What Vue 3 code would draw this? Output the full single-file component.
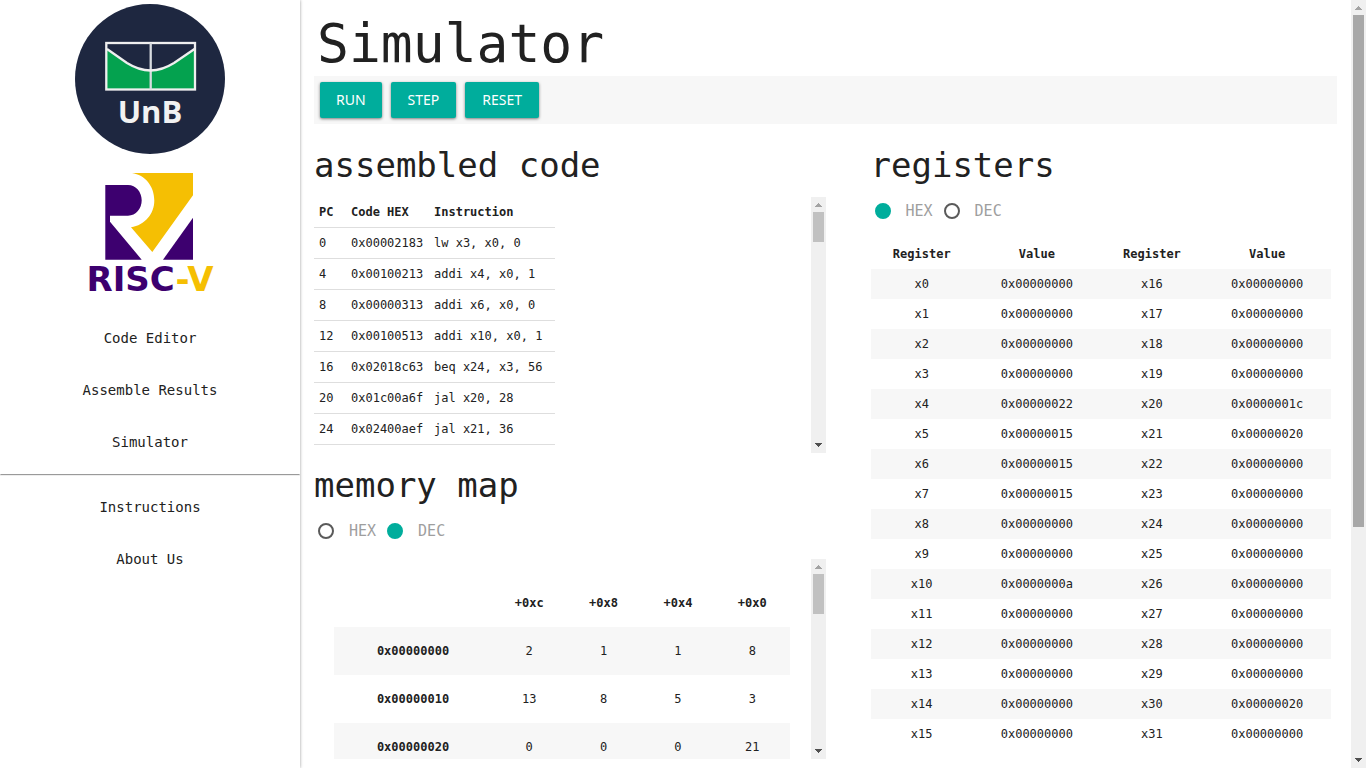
<script setup>
import { ref } from 'vue'

const memoryBase = ref('dec')
const registerBase = ref('hex')

const mainLinks = ['Code Editor', 'Assemble Results', 'Simulator']
const infoLinks = ['Instructions', 'About Us']
const actions = ['RUN', 'STEP', 'RESET']

const code = [
  [0, '0x00002183', 'lw x3, x0, 0'],
  [4, '0x00100213', 'addi x4, x0, 1'],
  [8, '0x00000313', 'addi x6, x0, 0'],
  [12, '0x00100513', 'addi x10, x0, 1'],
  [16, '0x02018c63', 'beq x24, x3, 56'],
  [20, '0x01c00a6f', 'jal x20, 28'],
  [24, '0x02400aef', 'jal x21, 36'],
]

const memory = [
  ['0x00000000', 2, 1, 1, 8],
  ['0x00000010', 13, 8, 5, 3],
  ['0x00000020', 0, 0, 0, 21],
]

const nonZero = { 4: 0x22, 5: 0x15, 6: 0x15, 7: 0x15, 10: 0xa, 20: 0x1c, 21: 0x20, 30: 0x20 }
const hex = (i) => '0x' + (nonZero[i] || 0).toString(16).padStart(8, '0')
const registers = Array.from({ length: 16 }, (_, i) => [`x${i}`, hex(i), `x${i + 16}`, hex(i + 16)])
</script>

<template>
  <div class="app">
    <aside class="sidebar">
      <svg class="unb" viewBox="0 0 150 150" role="img" aria-label="UnB">
        <circle cx="75" cy="75" r="75" fill="#1e2740" />
        <path d="M32 46 L54 60.500 Q75.500 72 97 60.500 L119.500 46 V85 H32 Z" fill="#04a24f" />
        <g fill="none" stroke="#efefef" stroke-width="2.300">
          <rect x="31.300" y="39" width="88.700" height="46.500" />
          <path d="M75.700 39V85.500" stroke="#d8dce0" />
          <path d="M32 45 L52 59 Q64 66.500 75.500 66.500 Q87 66.500 99 59 L119.500 45" />
        </g>
        <text x="75" y="119" text-anchor="middle">UnB</text>
      </svg>
      <svg class="riscv" viewBox="0 0 150 118" role="img" aria-label="RISC-V">
        <g fill="#3d006f">
          <path d="M30.300 12H53C61 12 66.700 19 66.700 27.300S61 42.700 53 42.700H35V48.700L66.700 86.700H30.300Z" />
          <path d="M118 44.700V86.700H88Z" />
        </g>
        <path d="M57 0H118V22.300L77.300 79L56 54.300C70 52 79.300 41 79.300 27.500C79.300 13 70 2 57 0Z" fill="#f5bf03" />
        <text x="75" y="118" text-anchor="middle"><tspan fill="#3d006f">RISC</tspan><tspan fill="#f5bf03">-V</tspan></text>
      </svg>
      <nav>
        <a v-for="l in mainLinks" :key="l" href="#">{{ l }}</a>
        <hr />
        <a v-for="l in infoLinks" :key="l" href="#">{{ l }}</a>
      </nav>
    </aside>

    <main>
      <h1>Simulator</h1>
      <div class="toolbar">
        <button v-for="a in actions" :key="a" type="button">{{ a }}</button>
      </div>
      <div class="panels">
        <div class="left">
          <section>
            <h2>assembled code</h2>
            <div class="scroller code-box">
              <div class="view">
                <table class="code">
                  <thead>
                    <tr><th>PC</th><th>Code HEX</th><th>Instruction</th></tr>
                  </thead>
                  <tbody>
                    <tr v-for="r in code" :key="r[0]"><td v-for="c in r" :key="c">{{ c }}</td></tr>
                  </tbody>
                </table>
              </div>
              <div class="bar">
                <svg viewBox="0 0 15 15"><path d="M4 10H11V9H10V8H9V7H8V6H7V7H6V8H5V9H4Z" fill="#a3a3a3" /></svg>
                <div class="track"><div class="thumb short"></div></div>
                <svg viewBox="0 0 15 15"><path d="M4 5H11V6H10V7H9V8H8V9H7V8H6V7H5V6H4Z" fill="#505050" /></svg>
              </div>
            </div>
          </section>
          <section>
            <h2>memory map</h2>
            <div class="radios">
              <label><input v-model="memoryBase" type="radio" name="memory" value="hex" />HEX</label>
              <label><input v-model="memoryBase" type="radio" name="memory" value="dec" />DEC</label>
            </div>
            <div class="scroller memory-box">
              <div class="view inset">
                <table class="striped memory">
                  <thead>
                    <tr><th></th><th>+0xc</th><th>+0x8</th><th>+0x4</th><th>+0x0</th></tr>
                  </thead>
                  <tbody>
                    <tr v-for="r in memory" :key="r[0]">
                      <th>{{ r[0] }}</th>
                      <td v-for="i in 4" :key="i">{{ r[i] }}</td>
                    </tr>
                  </tbody>
                </table>
              </div>
              <div class="bar">
                <svg viewBox="0 0 15 15"><path d="M4 10H11V9H10V8H9V7H8V6H7V7H6V8H5V9H4Z" fill="#a3a3a3" /></svg>
                <div class="track"><div class="thumb medium"></div></div>
                <svg viewBox="0 0 15 15"><path d="M4 5H11V6H10V7H9V8H8V9H7V8H6V7H5V6H4Z" fill="#505050" /></svg>
              </div>
            </div>
          </section>
        </div>
        <section class="right">
          <h2>registers</h2>
          <div class="radios">
            <label><input v-model="registerBase" type="radio" name="registers" value="hex" />HEX</label>
            <label><input v-model="registerBase" type="radio" name="registers" value="dec" />DEC</label>
          </div>
          <table class="striped registers">
            <thead>
              <tr><th>Register</th><th>Value</th><th>Register</th><th>Value</th></tr>
            </thead>
            <tbody>
              <tr v-for="r in registers" :key="r[0]"><td v-for="(c, i) in r" :key="i">{{ c }}</td></tr>
            </tbody>
          </table>
        </section>
      </div>
    </main>

    <div class="bar page">
      <svg viewBox="0 0 15 15"><path d="M4 10H11V9H10V8H9V7H8V6H7V7H6V8H5V9H4Z" fill="#a3a3a3" /></svg>
      <div class="track"><div class="thumb long"></div></div>
      <svg viewBox="0 0 15 15"><path d="M4 5H11V6H10V7H9V8H8V9H7V8H6V7H5V6H4Z" fill="#505050" /></svg>
    </div>
  </div>
</template>

<style>
body {
  margin: 0;
  background: #fff;
}
</style>

<style scoped>
.app {
  display: flex;
  height: 100vh;
  overflow: hidden;
  color: #212121;
  font-family: "DejaVu Sans Mono", monospace;
  font-size: 12px;
}
.sidebar {
  display: flex;
  flex-direction: column;
  align-items: center;
  flex: 0 0 300px;
  padding-top: 4px;
  box-sizing: border-box;
  box-shadow: 0 0 3px rgba(0, 0, 0, 0.4);
}
.unb {
  width: 150px;
  height: 150px;
  flex: none;
}
.unb text {
  font: 700 31px "Open Sans", sans-serif;
  fill: #f2f2f2;
}
.riscv {
  width: 150px;
  height: 118px;
  flex: none;
  margin-top: 19px;
  overflow: visible;
}
.riscv text {
  font: 700 34px "DejaVu Sans", sans-serif;
}
nav {
  width: 100%;
  margin-top: 21px;
}
nav a {
  display: block;
  font-size: 14px;
  line-height: 52px;
  text-align: center;
  color: #212121;
  text-decoration: none;
}
hr {
  margin: 6px 0 5px;
  border: 1px solid #eee;
  border-top-color: #9a9a9a;
}
main {
  flex: 1;
  min-width: 0;
  padding: 12px 14px 0;
}
h1,
h2 {
  margin: 0;
  font-weight: 400;
}
h1 {
  padding-left: 3px;
  font-size: 53px;
  line-height: 64px;
}
.toolbar {
  display: flex;
  gap: 9px;
  padding: 6px;
  background: #f7f7f7;
}
button {
  height: 36px;
  padding: 0 16px 2px;
  border: 0;
  border-radius: 2px;
  background: #00ad9c;
  color: #fff;
  font: 14px "Noto Sans", sans-serif;
  box-shadow: 0 1px 3px rgba(0, 0, 0, 0.5);
}
button:nth-child(n + 2) {
  padding-left: 17px;
  padding-right: 17px;
}
.panels {
  display: grid;
  grid-template-columns: 1fr 1fr;
}
h2 {
  padding-top: 21px;
  font-size: 34px;
  line-height: 40px;
}
.right {
  padding: 0 6px 0 45px;
}
.scroller {
  display: flex;
}
.code-box {
  height: 256px;
  margin-top: 12px;
}
.left section + section h2 {
  padding-top: 12px;
}
.memory-box {
  height: 200px;
  margin-top: 18px;
}
.view {
  flex: 1;
  overflow: hidden;
}
.inset {
  padding: 20px 21px 0 20px;
}
.bar {
  display: flex;
  flex-direction: column;
  flex: 0 0 15px;
  background: #f0f0f0;
}
.bar svg {
  width: 15px;
  height: 15px;
  flex: none;
}
.track {
  flex: 1;
}
.thumb {
  margin: 0 2px;
  background: #c1c1c1;
}
.short {
  height: 30px;
}
.medium {
  height: 40px;
}
.long {
  height: 69.4%;
  background: #a8a8a8;
}
.radios {
  display: flex;
  gap: 11px;
  height: 20px;
  margin-top: 16px;
  padding-left: 4px;
}
label {
  display: flex;
  align-items: center;
  gap: 15px;
  font-size: 15px;
  line-height: 20px;
  color: #9e9e9e;
}
input {
  width: 16px;
  height: 16px;
  margin: 0;
  box-sizing: border-box;
  appearance: none;
  border: 2px solid #5a5a5a;
  border-radius: 50%;
}
input:checked {
  border-color: #00ad9c;
  background: #00ad9c;
}
table {
  border-collapse: collapse;
}
.code th,
.code td {
  height: 30px;
  padding: 0 5px;
  border-bottom: 1px solid #dedede;
  text-align: left;
}
.code {
  width: 241px;
  table-layout: fixed;
}
.code th:nth-child(1) {
  width: 22px;
}
.code th:nth-child(2) {
  width: 73px;
}
.striped {
  width: 100%;
  table-layout: fixed;
  text-align: center;
}
.striped th,
.striped td {
  padding: 0;
}
.striped tbody tr:nth-child(odd) {
  background: #f7f7f7;
}
.memory tr {
  height: 48px;
}
.memory th:first-child {
  width: 158px;
}
.registers {
  margin-top: 18px;
}
.registers tr {
  height: 30px;
}
.registers th,
.registers td {
  padding-left: 1px;
}
.registers th:nth-child(odd) {
  width: 22%;
}
.registers th:nth-child(even) {
  width: 28%;
}
</style>
